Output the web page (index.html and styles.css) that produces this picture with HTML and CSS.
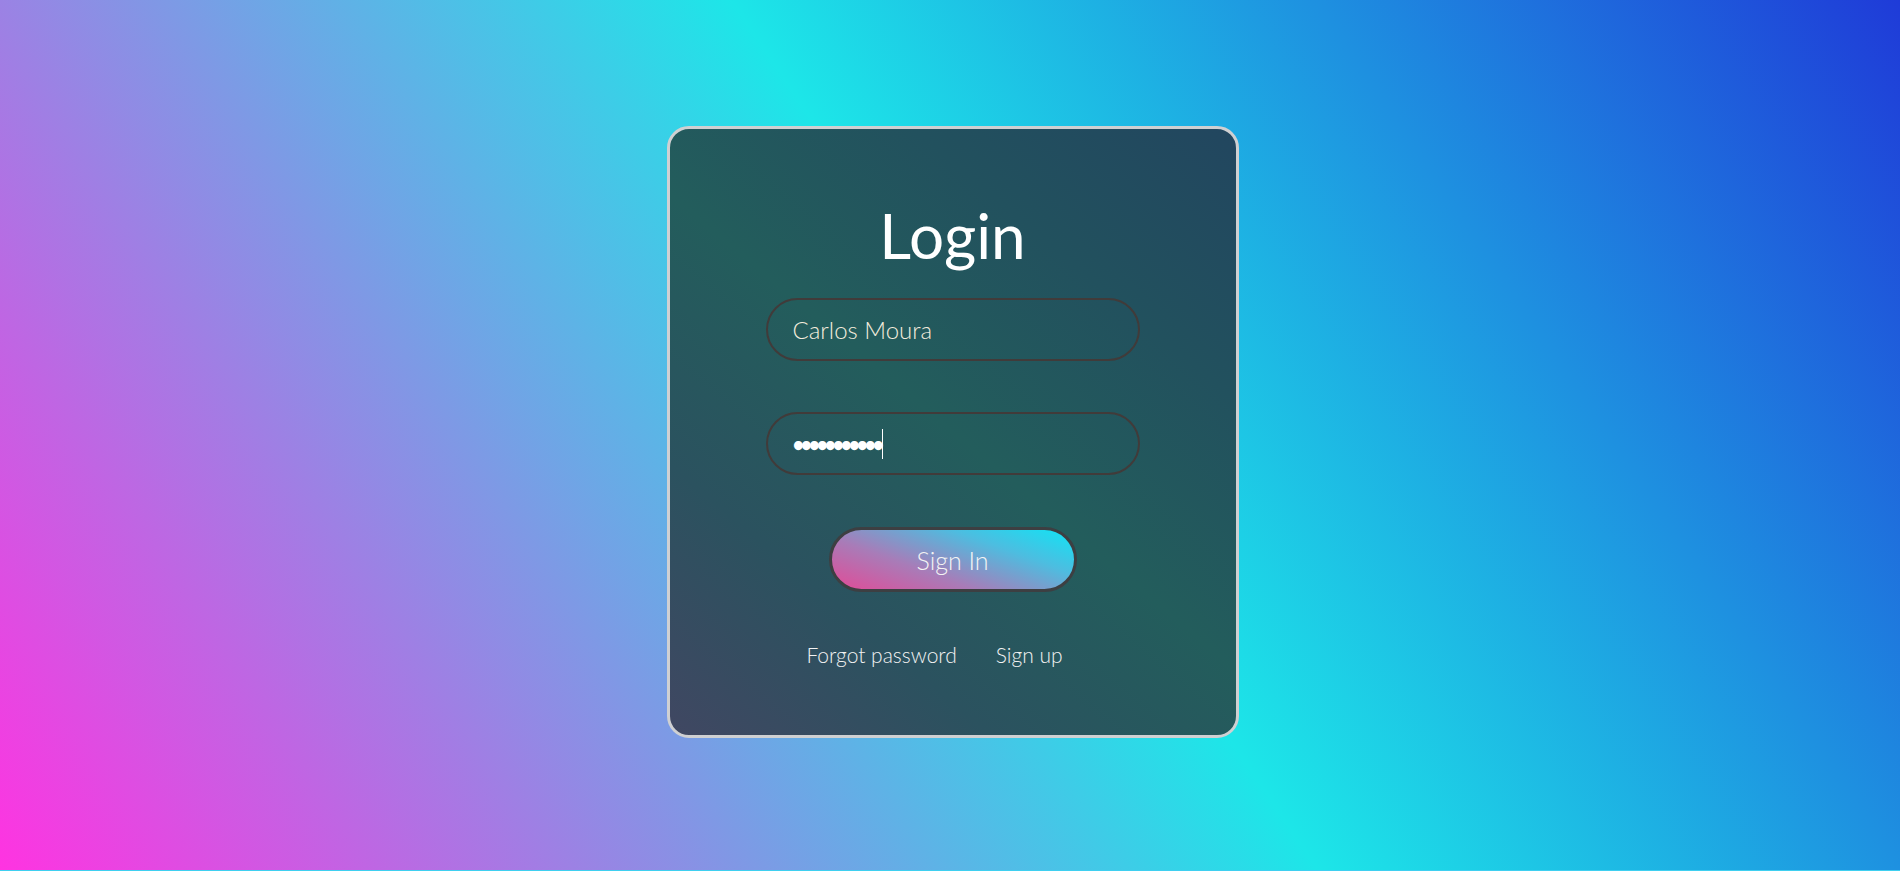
FILE: index.html
```html
<!DOCTYPE html>
<html lang="en">
<head>
<meta charset="utf-8">
<title>Login</title>
<link rel="stylesheet" href="styles.css">
</head>
<body>
  <main class="page">
    <section class="card">
      <h1 class="title">Login</h1>
      <div class="field field-user">Carlos Moura</div>
      <div class="field field-pass"><span class="dots">•••••••••••</span><span class="caret"></span></div>
      <button class="btn" type="button">Sign In</button>
      <nav class="links">
        <a class="link" href="#">Forgot password</a>
        <a class="link" href="#">Sign up</a>
      </nav>
    </section>
  </main>
</body>
</html>
```

FILE: styles.css
```css
html {
  background: #3fcff0;
}
body {
  margin: 0;
  font-family: "Lato", "Open Sans", sans-serif;
}
.page {
  height: 870px;
  box-sizing: border-box;
  padding: 0 0 6px 5px;
  display: flex;
  align-items: center;
  justify-content: center;
  background: linear-gradient(56deg, #ff33e1 0%, #1de6e8 53%, #1f3bd8 100%);
}
.card {
  width: 572px;
  height: 612px;
  box-sizing: border-box;
  border: 3px solid #cfd0d2;
  border-radius: 22px;
  background: linear-gradient(40deg, #404762 0%, #2b525f 25%, #235d5c 50%, #22515e 75%, #22465f 100%);
  display: flex;
  flex-direction: column;
  align-items: center;
  padding-top: 75px;
}
.title {
  margin: 0;
  font-size: 62px;
  line-height: 62px;
  font-weight: 400;
  color: #ffffff;
}
.field {
  width: 374px;
  height: 63px;
  box-sizing: border-box;
  border: 2px solid #413b3a;
  border-radius: 32px;
  padding-left: 25px;
  display: flex;
  align-items: center;
  font-size: 24px;
  font-weight: 300;
  color: #f3ecdd;
}
.field-user {
  margin-top: 32px;
}
.field-pass {
  margin-top: 51px;
}
.dots {
  color: #ffffff;
  font-size: 20px;
  font-weight: 700;
  letter-spacing: -3.6px;
}
.caret {
  width: 1px;
  height: 30px;
  background: #ffffff;
  margin-left: 1px;
}
.btn {
  margin-top: 52px;
  width: 248px;
  height: 65px;
  box-sizing: border-box;
  border: 3px solid #3d3f42;
  border-radius: 33px;
  background: linear-gradient(20deg, #e24b97 0%, #a87cb8 35%, #4dbde0 70%, #10e4f5 100%);
  font-family: "Lato", "Open Sans", sans-serif;
  font-size: 25px;
  font-weight: 300;
  color: #f4f4f4;
  padding: 0;
}
.links {
  margin-top: 52px;
  display: flex;
  gap: 39px;
  padding-right: 36px;
}
.link {
  font-size: 21px;
  line-height: 21px;
  font-weight: 300;
  color: #f2f2f2;
  text-decoration: none;
}
```
